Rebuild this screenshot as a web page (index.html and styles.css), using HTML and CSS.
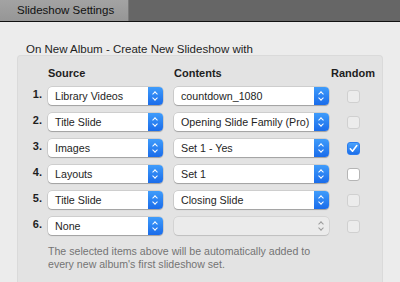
FILE: index.html
```html
<!DOCTYPE html>
<html lang="en">
<head>
    <meta charset="UTF-8">
    <title>Slideshow Settings</title>
    <link rel="stylesheet" href="styles.css">
</head>
<body>
    <div class="tabbar">
        <div class="tab">Slideshow Settings</div>
    </div>
    <div class="content">
        <div class="title">On New Album - Create New Slideshow with</div>
        <div class="panel">
            <div class="row head">
                <div class="num"></div>
                <div class="col-src">Source</div>
                <div class="col-cnt">Contents</div>
                <div class="col-rnd">Random</div>
            </div>

            <div class="row">
                <div class="num">1.</div>
                <div class="select src"><span>Library Videos</span><i class="arrow"></i></div>
                <div class="select cnt"><span>countdown_1080</span><i class="arrow"></i></div>
                <div class="col-rnd"><div class="check off"></div></div>
            </div>
            <div class="row">
                <div class="num">2.</div>
                <div class="select src"><span>Title Slide</span><i class="arrow"></i></div>
                <div class="select cnt"><span>Opening Slide Family (Pro)</span><i class="arrow"></i></div>
                <div class="col-rnd"><div class="check off"></div></div>
            </div>
            <div class="row">
                <div class="num">3.</div>
                <div class="select src"><span>Images</span><i class="arrow"></i></div>
                <div class="select cnt"><span>Set 1 - Yes</span><i class="arrow"></i></div>
                <div class="col-rnd"><div class="check on">
                    <svg width="13" height="13" viewBox="0 0 13 13"><path d="M3.3 6.8 L5.5 9.2 L9.8 3.6" fill="none" stroke="#fff" stroke-width="1.6" stroke-linecap="round" stroke-linejoin="round"/></svg>
                </div></div>
            </div>
            <div class="row">
                <div class="num">4.</div>
                <div class="select src"><span>Layouts</span><i class="arrow"></i></div>
                <div class="select cnt"><span>Set 1</span><i class="arrow"></i></div>
                <div class="col-rnd"><div class="check"></div></div>
            </div>
            <div class="row">
                <div class="num">5.</div>
                <div class="select src"><span>Title Slide</span><i class="arrow"></i></div>
                <div class="select cnt"><span>Closing Slide</span><i class="arrow"></i></div>
                <div class="col-rnd"><div class="check off"></div></div>
            </div>
            <div class="row">
                <div class="num">6.</div>
                <div class="select src"><span>None</span><i class="arrow"></i></div>
                <div class="select cnt disabled"><span></span><i class="arrow"></i></div>
                <div class="col-rnd"><div class="check off"></div></div>
            </div>

            <p class="note">The selected items above will be automatically added to<br>every new album's first slideshow set.</p>
        </div>
    </div>
</body>
</html>
```

FILE: styles.css
```css
body{
    margin: 0;
    background-color: #ececec;
    font-family: 'Liberation Sans', Arial, sans-serif;
    color: #1e1e1e;
    height: 282px;
    overflow: hidden;
}
.tabbar{
    height: 21px;
    background-color: #666666;
    border-bottom: 1px solid #111;
    display: flex;
}
.tab{
    width: 111px;
    padding-left: 17px;
    background: linear-gradient(#a3a3a3, #969696);
    border-right: 1px solid #7a7a7a;
    font-size: 11.5px;
    line-height: 21px;
    color: #111;
}
.content{
    padding: 21px 17px 0 17px;
}
.title{
    font-size: 11.5px;
    padding-left: 9px;
    height: 12px;
    line-height: 12px;
}
.panel{
    margin-top: 0;
    background-color: #e3e3e3;
    border: 1px solid #dadada;
    border-bottom: none;
    border-radius: 4px 4px 0 0;
    padding: 9px 0 0 12px;
    box-sizing: border-box;
    height: 227px;
    overflow: hidden;
}
.row{
    display: flex;
    align-items: center;
    height: 18px;
    margin-bottom: 8px;
}
.row.head{
    font-size: 11px;
    font-weight: bold;
    margin-bottom: 6px;
    height: 16px;
}
.num{
    width: 12px;
    margin-right: 6px;
    text-align: right;
    font-size: 11px;
    font-weight: bold;
    align-self: flex-start;
    line-height: 14px;
}
.col-src{
    width: 115px;
    margin-right: 11px;
}
.col-cnt{
    width: 155px;
    margin-right: 4px;
}
.col-rnd{
    width: 40px;
    display: flex;
    justify-content: center;
}
.select{
    height: 18px;
    box-sizing: border-box;
    background-color: #fff;
    border-radius: 4px;
    box-shadow: 0 0 0 0.5px rgba(0,0,0,0.18), 0 1px 1px rgba(0,0,0,0.22);
    display: flex;
    align-items: center;
    font-size: 10.7px;
    overflow: hidden;
}
.select span{
    flex: 1;
    padding-left: 7px;
    white-space: nowrap;
}
.select.src{
    width: 115px;
    margin-right: 11px;
}
.select.cnt{
    width: 155px;
    margin-right: 4px;
}
.arrow{
    width: 15px;
    height: 18px;
    background: linear-gradient(#3f9cfb, #1a6cea);
    position: relative;
}
.arrow::before,
.arrow::after{
    content: "";
    position: absolute;
    left: 5px;
    width: 3px;
    height: 3px;
    border-left: 1.3px solid #fff;
    border-top: 1.3px solid #fff;
}
.arrow::before{
    top: 5px;
    transform: rotate(45deg);
}
.arrow::after{
    top: 9px;
    transform: rotate(-135deg);
}
.select.disabled{
    background-color: #ebebeb;
    box-shadow: 0 0 0 0.5px rgba(0,0,0,0.12), 0 1px 1px rgba(0,0,0,0.1);
}
.select.disabled .arrow{
    background: none;
}
.select.disabled .arrow::before,
.select.disabled .arrow::after{
    border-color: #9a9a9a;
}
.check{
    width: 13px;
    height: 13px;
    box-sizing: border-box;
    background-color: #fff;
    border: 1px solid #b5b5b5;
    border-radius: 3px;
}
.check.off{
    background-color: #ececec;
    border-color: #d0d0d0;
}
.check.on{
    background: linear-gradient(#4aa3fc, #1d6fea);
    border-color: #2a7cef;
}
.check.on svg{
    display: block;
    margin: -1px;
}
.note{
    margin: 10px 0 0 18px;
    font-size: 10.6px;
    line-height: 12.5px;
    color: #747474;
}
```
